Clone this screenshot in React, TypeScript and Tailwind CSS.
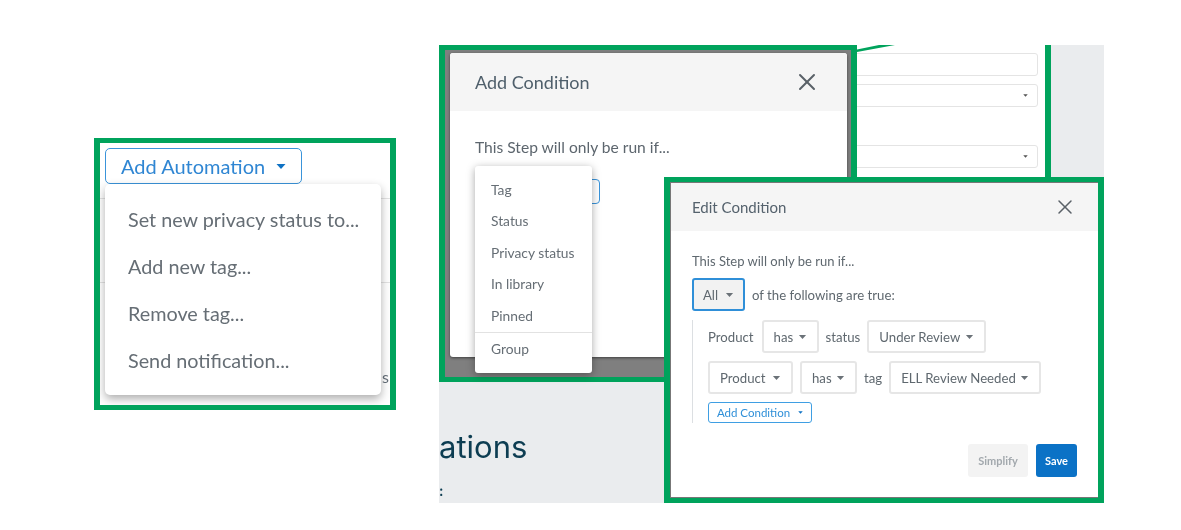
import React from "react";
import { X } from "lucide-react";

const Caret = ({ className = "" }: { className?: string }) => (
  <svg viewBox="0 0 10 5" className={className} fill="currentColor" aria-hidden="true">
    <path d="M0.5 0h9L5 5z" />
  </svg>
);

const Select = ({ label, className }: { label: string; className: string }) => (
  <div className={`flex h-[33px] items-center justify-between rounded-[3px] border-2 border-[#e6e6e6] bg-white px-[10px] ${className}`}>
    <span className="pt-[2px]">{label}</span>
    <Caret className="h-[4px] w-[9px] text-[#6b7278]" />
  </div>
);

const Word = ({ children }: { children: string }) => <span className="pt-[2px]">{children}</span>;

function AutomationPanel() {
  return (
    <section className="absolute left-[94px] top-[138px] h-[272px] w-[302px] overflow-hidden border-x-[6px] border-y-[5px] border-[#00a35c] bg-white">
      <div className="absolute left-0 right-0 top-[55px] h-px bg-[#e3e3e3]" />
      <div className="absolute left-0 right-0 top-[139px] h-px bg-[#e3e3e3]" />
      <span className="absolute right-[1px] top-[222px] text-[16px] text-[#66707a]">s</span>
      <div className="ml-[5px] mt-[5px] flex h-9 w-[197px] items-center rounded-[5px] border-[1.5px] border-[#3a94da] pl-[15px] text-[20px] text-[#2f86d3]">
        <span>Add Automation</span>
        <Caret className="ml-[11px] h-[5px] w-[10px] text-[#0f72c4]" />
      </div>
      <div className="relative ml-[5px] flex h-[211px] w-[276px] flex-col rounded-[5px] bg-white pl-[23px] pt-[12px] text-[19.8px] text-[#666e75] shadow-[0_4px_10px_rgba(0,0,0,0.32)]">
        <span className="flex h-[47px] items-center">Set new privacy status to...</span>
        <span className="flex h-[47px] items-center">Add new tag...</span>
        <span className="flex h-[47px] items-center">Remove tag...</span>
        <span className="flex h-[47px] items-center">Send notification...</span>
      </div>
    </section>
  );
}

function BackgroundForm() {
  return (
    <div className="absolute left-[418px] top-0 h-[132px] w-[194px] bg-white">
      <svg viewBox="0 0 40 8" className="absolute left-0 top-0 h-2 w-10 text-[#00a35c]" aria-hidden="true">
        <path d="M0 4.5 L22 0 L38 0 L0 7z" fill="currentColor" />
      </svg>
      <div className="ml-[-8px] mt-2 flex w-[189px] flex-col">
        <div className="h-[23px] rounded-[3px] border border-[#e4e4e4] bg-white" />
        <div className="mt-[8px] flex h-[23px] items-center justify-end rounded-[3px] border border-[#e4e4e4] bg-white pr-[9px]">
          <Caret className="h-[3px] w-[5px] text-[#555]" />
        </div>
        <div className="mt-[38px] flex h-[23px] items-center justify-end rounded-[3px] border border-[#e4e4e4] bg-white pr-[9px]">
          <Caret className="h-[3px] w-[5px] text-[#555]" />
        </div>
      </div>
      <div className="absolute right-0 top-0 h-full w-[6px] bg-[#00a35c]" />
    </div>
  );
}

function AddConditionPanel() {
  return (
    <section className="absolute left-0 top-0 h-[337px] w-[418px] border-x-[6px] border-y-[5px] border-[#00a35c] bg-[#7f7f7f]">
      <div className="ml-[5px] mt-[3px] h-[304px] w-[397px] overflow-hidden rounded-[3px] bg-white shadow-[0_1px_3px_rgba(0,0,0,0.5)]">
        <header className="flex h-[58px] items-center justify-between bg-[#f5f5f5] pl-[25px] pr-[26px] text-[18px] text-[#4f5f6b]">
          <span>Add Condition</span>
          <X className="h-[28px] w-[28px] text-[#5a6168]" strokeWidth={1.7} />
        </header>
        <p className="ml-[25px] mt-[26px] text-[15.6px] leading-5 text-[#5d666e]">This Step will only be run if...</p>
      </div>
      <div className="absolute left-[115px] top-[129px] h-[25px] w-[40px] rounded-r-[4px] border-[1.5px] border-[#3a94da]" />
      <div className="absolute left-[30px] top-[116px] w-[117px] rounded-[3px] bg-white pt-[8.5px] text-[13.8px] text-[#666e75] shadow-[0_2px_8px_rgba(0,0,0,0.35)]">
        {["Tag", "Status", "Privacy status", "In library", "Pinned"].map((item) => (
          <div key={item} className="flex h-[31.5px] items-center pl-4">{item}</div>
        ))}
        <div className="border-t border-[#e2e2e2]" />
        <div className="flex h-[33px] items-center pb-[1px] pl-4">Group</div>
        <div className="h-[7px]" />
      </div>
    </section>
  );
}

function EditConditionPanel() {
  return (
    <section className="absolute left-[225px] top-[132px] h-[326px] w-[440px] border-x-[6px] border-y-[5px] border-[#00a35c] bg-[#777]">
      <div className="ml-px mt-px flex h-[314px] w-[427px] flex-col bg-white text-[13.2px] text-[#5f686f]">
        <header className="flex h-[48px] shrink-0 items-center justify-between bg-[#f5f5f5] pl-[21px] pr-[21px] text-[15px] text-[#55626d]">
          <span className="pt-[1px]">Edit Condition</span>
          <X className="h-[24px] w-[24px] text-[#5a6168]" strokeWidth={1.5} />
        </header>
        <p className="ml-[21px] mt-[22px] text-[13px] leading-4">This Step will only be run if...</p>
        <div className="ml-[21px] mt-[9px] flex items-center gap-[7px]">
          <div className="flex h-[33px] w-[53px] items-center justify-center gap-[7px] rounded-[3px] border-2 border-[#2f8fd8] bg-[#f2f2f2]">
            <span className="pt-[2px]">All</span>
            <Caret className="h-[4px] w-[9px] text-[#6b7278]" />
          </div>
          <Word>of the following are true:</Word>
        </div>
        <div className="ml-[21px] mt-[9px] flex h-[103px] flex-col border-l border-[#dcdfe2] pl-[15px]">
          <div className="flex items-center gap-[7px]">
            <span className="mr-px pt-[2px]">Product</span>
            <Select label="has" className="w-[57px]" />
            <Word>status</Word>
            <Select label="Under Review" className="w-[119px]" />
          </div>
          <div className="mt-[8px] flex items-center gap-[7px]">
            <Select label="Product" className="w-[85px]" />
            <Select label="has" className="w-[57px]" />
            <Word>tag</Word>
            <Select label="ELL Review Needed" className="w-[152px]" />
          </div>
          <div className="mt-[8px] flex h-[21px] w-[104px] items-center justify-center gap-[8px] rounded-[3px] border border-[#3f9fe3] text-[11.5px] text-[#2f8fd8]">
            <span>Add Condition</span>
            <Caret className="h-[3px] w-[5px] text-[#0f72c4]" />
          </div>
        </div>
        <div className="mr-[21px] mt-[21px] flex justify-end gap-2 text-[11px] font-bold">
          <div className="flex h-[33px] w-[60px] items-center justify-center rounded-[3px] bg-[#f3f3f3] pt-[1px] text-[#a2a8ad]">Simplify</div>
          <div className="flex h-[33px] w-[41px] items-center justify-center rounded-[3px] bg-[#0b72c6] pt-[1px] text-white">Save</div>
        </div>
      </div>
    </section>
  );
}

export default function App() {
  return (
    <div className="relative h-[530px] w-[1181px] overflow-hidden bg-white font-['Lato','Noto_Sans',sans-serif] blur-[0.3px]">
      <AutomationPanel />
      <div className="absolute left-[439px] top-[45px] h-[458px] w-[665px] overflow-hidden bg-[#eaecee]">
        <span className="absolute left-0 top-[382px] font-['Inter',sans-serif] text-[31px] leading-10 text-[#0d3d52]">ations</span>
        <span className="absolute left-0 top-[436px] font-['Inter',sans-serif] text-[14px] font-semibold leading-5 text-[#0d3d52]">:</span>
        <BackgroundForm />
        <AddConditionPanel />
        <EditConditionPanel />
      </div>
    </div>
  );
}
